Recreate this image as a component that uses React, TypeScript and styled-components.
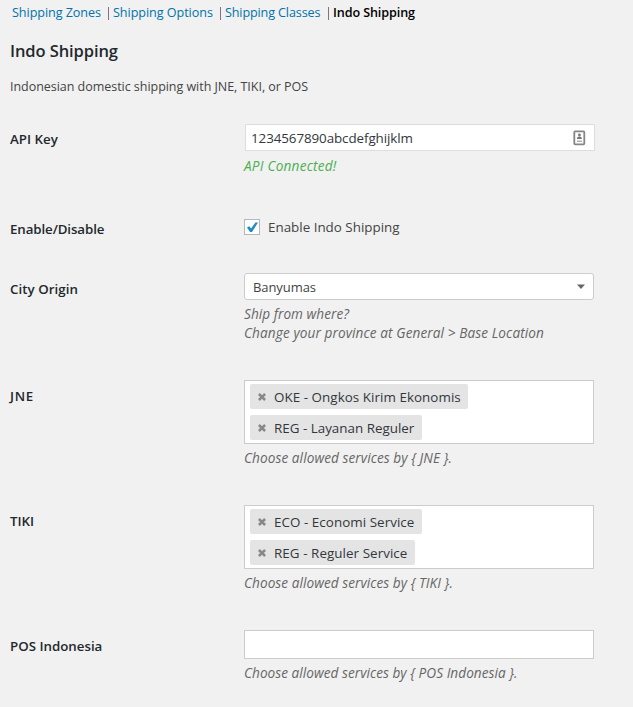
import React from 'react';
import styled, { createGlobalStyle } from 'styled-components';

const GlobalStyle = createGlobalStyle`
  * { box-sizing: border-box; }
  html, body { margin: 0; background: #f1f1f1; }
  body {
    font-family: "Open Sans", "Noto Sans", sans-serif;
    color: #444;
    overflow: hidden;
  }
`;

const Page = styled.main`
  width: 633px;
  height: 707px;
  background: #f1f1f1;
  padding: 3px 0 0 10px;
  overflow: hidden;
`;

const Nav = styled.nav`
  display: flex;
  height: 20px;
  padding-left: 2px;
  line-height: 20px;
  font-size: 12.6px;
  white-space: nowrap;
`;

const NavItem = styled.a<{ $width: number; $ls: number; $current?: boolean }>`
  width: ${p => p.$width}px;
  letter-spacing: ${p => p.$ls}px;
  color: ${p => (p.$current ? '#000' : '#0073aa')};
  font-weight: ${p => (p.$current ? 600 : 400)};
`;

const Divider = styled.span`
  width: 7px;
  flex: none;
  display: flex;
  &::before {
    content: '';
    width: 1px;
    height: 13px;
    margin: 4px 0 0 2px;
    background: #80708c;
  }
`;

const Title = styled.h2`
  margin: 16px 0 0;
  height: 24px;
  line-height: 24px;
  font-size: 16.5px;
  font-weight: 600;
  letter-spacing: -0.09px;
  color: #23282d;
`;

const Intro = styled.p`
  margin: 14px 0 0;
  height: 20px;
  line-height: 20px;
  font-size: 12.5px;
  letter-spacing: -0.035px;
`;

const Form = styled.div`
  padding-top: 27px;
`;

const Row = styled.div<{ $height: number }>`
  display: grid;
  grid-template-columns: 234px 351px;
  height: ${p => p.$height}px;
`;

const Label = styled.label<{ $top?: number; $ls?: number }>`
  padding-top: ${p => p.$top ?? 6}px;
  line-height: 20px;
  font-size: 13.3px;
  font-weight: 600;
  letter-spacing: ${p => p.$ls ?? 0}px;
  color: #23282d;
`;

const TextField = styled.div`
  display: flex;
  align-items: center;
  justify-content: space-between;
  width: 350px;
  height: 27px;
  margin-left: 1px;
  padding: 0 8px 0 5px;
  border: 1px solid #ddd;
  background: #fff;
  color: #32373c;
  font-size: 13.4px;
  letter-spacing: -0.09px;
`;

const Help = styled.p<{ $ls?: number; $color?: string }>`
  margin: 0;
  line-height: 19px;
  font-size: 13.6px;
  font-style: italic;
  white-space: nowrap;
  letter-spacing: ${p => p.$ls ?? 0}px;
  color: ${p => p.$color ?? '#666'};
`;

const HelpGroup = styled.div<{ $top: number }>`
  margin-top: ${p => p.$top}px;
`;

const CheckLine = styled.div`
  display: flex;
  gap: 8px;
  height: 16px;
  line-height: 16px;
  font-size: 13.4px;
`;

const CheckBox = styled.span`
  display: block;
  width: 16px;
  height: 16px;
  border: 1px solid #b4b9be;
  background: #fff;
  svg { display: block; }
`;

const Select = styled.div`
  display: flex;
  align-items: center;
  justify-content: space-between;
  width: 350px;
  height: 27px;
  padding: 0 8px;
  border: 1px solid #ccc;
  border-radius: 3px;
  background: #fff;
  font-size: 13px;
  letter-spacing: -0.08px;
`;

const MultiSelect = styled.div<{ $height: number }>`
  display: flex;
  flex-direction: column;
  align-items: flex-start;
  gap: 6px;
  width: 350px;
  height: ${p => p.$height}px;
  padding: 3px 5px;
  border: 1px solid #ccc;
  background: #fff;
`;

const Chip = styled.span<{ $width: number; $ls: number }>`
  display: flex;
  align-items: center;
  gap: 8px;
  width: ${p => p.$width}px;
  height: 25px;
  padding-left: 8px;
  border-radius: 2px;
  background: #e4e4e4;
  color: #32373c;
  font-size: 13.4px;
  letter-spacing: ${p => p.$ls}px;
  white-space: nowrap;
  svg { flex: none; }
`;

const CardIcon = () => (
  <svg width="13" height="16" viewBox="0 0 13 16">
    <rect x="1.3" y="1.4" width="10" height="13" rx="0.8" fill="#fff" stroke="#858585" strokeWidth="1.8" />
    <circle cx="6.4" cy="5" r="1.4" fill="#777" />
    <path d="M4 9V8Q4 6.4 6.4 6.4T8.8 8V9Z" fill="#777" />
    <path d="M4 11.2H9" stroke="#999" strokeWidth="1.2" />
  </svg>
);

const CheckIcon = () => (
  <svg width="14" height="14" viewBox="0 0 14 14">
    <path d="M2 7.4L4.3 6.2L6.1 8.5L10.4 2.4L13 2.6L7 12H5Z" fill="#1e8cbe" />
  </svg>
);

const CaretIcon = () => (
  <svg width="8" height="5" viewBox="0 0 8 5">
    <path d="M0 0.5H8L4 5Z" fill="#666" />
  </svg>
);

const RemoveIcon = () => (
  <svg width="8" height="8" viewBox="0 0 8 8">
    <path d="M0.9 1L7.1 7M7.1 1L0.9 7" stroke="#888" strokeWidth="2.5" />
  </svg>
);

type Service = { name: string; width: number; ls: number };
type Carrier = { name: string; labelLs: number; helpLs: number; height: number; services: Service[] };

const carriers: Carrier[] = [
  {
    name: 'JNE', labelLs: 0.7, helpLs: 0.08, height: 64,
    services: [
      { name: 'OKE - Ongkos Kirim Ekonomis', width: 218, ls: 0.05 },
      { name: 'REG - Layanan Reguler', width: 172, ls: 0 },
    ],
  },
  {
    name: 'TIKI', labelLs: 0, helpLs: 0.06, height: 64,
    services: [
      { name: 'ECO - Economi Service', width: 172, ls: 0.05 },
      { name: 'REG - Reguler Service', width: 165, ls: 0.06 },
    ],
  },
  { name: 'POS Indonesia', labelLs: 0, helpLs: 0.045, height: 29, services: [] },
];

export default function App() {
  return (
    <>
      <GlobalStyle />
      <Page>
        <Nav>
          <NavItem $width={94} $ls={-0.06}>Shipping Zones</NavItem>
          <Divider />
          <NavItem $width={105} $ls={-0.05}>Shipping Options</NavItem>
          <Divider />
          <NavItem $width={101} $ls={-0.13}>Shipping Classes</NavItem>
          <Divider />
          <NavItem $width={90} $ls={-0.1} $current>Indo Shipping</NavItem>
        </Nav>
        <Title>Indo Shipping</Title>
        <Intro>Indonesian domestic shipping with JNE, TIKI, or POS</Intro>
        <Form>
          <Row $height={95}>
            <Label $top={5} $ls={0.03}>API Key</Label>
            <div>
              <TextField>1234567890abcdefghijklm<CardIcon /></TextField>
              <HelpGroup $top={5}>
                <Help $color="#4caf50" $ls={0.23}>API Connected!</Help>
              </HelpGroup>
            </div>
          </Row>
          <Row $height={54}>
            <Label $top={0} $ls={-0.1}>Enable/Disable</Label>
            <CheckLine>
              <CheckBox><CheckIcon /></CheckBox>
              Enable Indo Shipping
            </CheckLine>
          </Row>
          <Row $height={107}>
            <Label $ls={0.06}>City Origin</Label>
            <div>
              <Select>Banyumas<CaretIcon /></Select>
              <HelpGroup $top={4}>
                <Help $ls={0.04}>Ship from where?</Help>
                <Help $ls={0.1}>Change your province at General &gt; Base Location</Help>
              </HelpGroup>
            </div>
          </Row>
          {carriers.map(c => (
            <Row key={c.name} $height={125}>
              <Label $ls={c.labelLs}>{c.name}</Label>
              <div>
                <MultiSelect $height={c.height}>
                  {c.services.map(s => (
                    <Chip key={s.name} $width={s.width} $ls={s.ls}><RemoveIcon />{s.name}</Chip>
                  ))}
                </MultiSelect>
                <HelpGroup $top={4}>
                  <Help $ls={c.helpLs}>{`Choose allowed services by { ${c.name} }.`}</Help>
                </HelpGroup>
              </div>
            </Row>
          ))}
        </Form>
      </Page>
    </>
  );
}
